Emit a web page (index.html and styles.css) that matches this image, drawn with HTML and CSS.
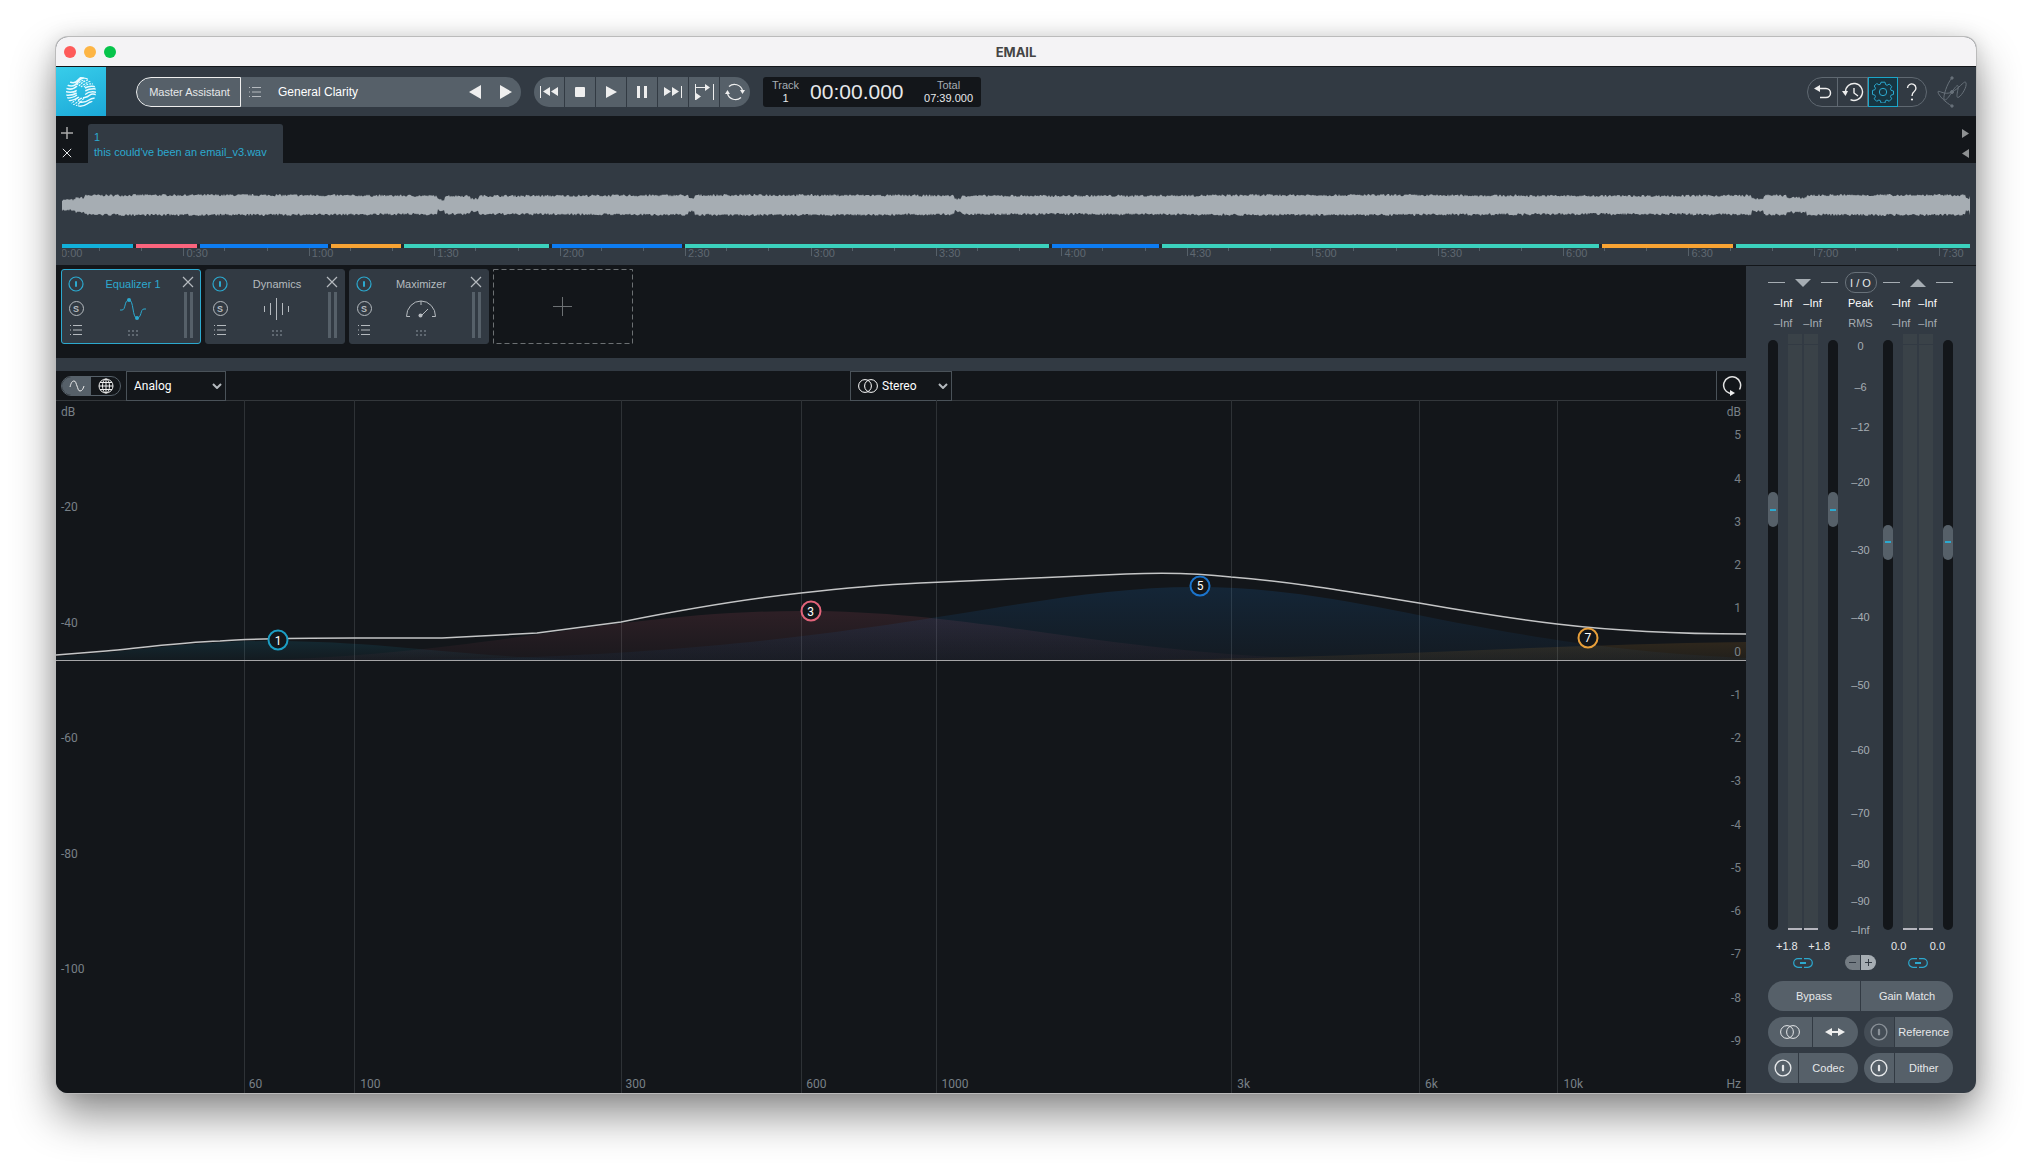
FILE: index.html
```
<!DOCTYPE html>
<html lang="en">
<head>
    <meta charset="UTF-8">
    <meta name="viewport" content="width=device-width, initial-scale=1.0">
    <title>EMAIL</title>
    <link rel="stylesheet" href="styles.css">
</head>
<body>
    <svg class="defs" width="0" height="0" aria-hidden="true">
        <symbol id="power" viewBox="0 0 16 16"><circle cx="8" cy="8" r="7" fill="none" stroke="currentColor" stroke-width="1.200"/><rect x="7" y="5" width="2" height="6" rx="1" fill="currentColor"/></symbol>
        <symbol id="close" viewBox="0 0 12 12"><path d="M1 1l10 10M11 1L1 11" stroke="currentColor" stroke-width="1.200"/></symbol>
        <symbol id="list" viewBox="0 0 12 10"><path d="M0 .5h1M3 .5h9M0 5h1M3 5h9M0 9.5h1M3 9.5h9" stroke="currentColor"/></symbol>
        <symbol id="dots" viewBox="0 0 11 7"><path d="M0 1h2M4 1h2M8 1h2M0 5h2M4 5h2M8 5h2" stroke="currentColor" stroke-width="2"/></symbol>
        <symbol id="chevron" viewBox="0 0 10 6"><path d="M1 1l4 4 4-4" fill="none" stroke="currentColor" stroke-width="2"/></symbol>
        <symbol id="rings" viewBox="0 0 20 14"><circle cx="7" cy="7" r="6.4" fill="none" stroke="currentColor"/><circle cx="13" cy="7" r="6.4" fill="none" stroke="currentColor"/></symbol>
        <symbol id="link" viewBox="0 0 20 10"><path d="M9 .7H5a4.300 4.300 0 0 0 0 8.600H9M11 .7h4a4.300 4.300 0 0 1 0 8.600h-4" fill="none" stroke="currentColor" stroke-width="1.200"/><path d="M7 5h6" stroke="currentColor" stroke-width="2"/></symbol>
    </svg>

    <div class="window">
        <header class="titlebar">
            <div class="lights"><span class="light red"></span><span class="light yellow"></span><span class="light green"></span></div>
            <h1>EMAIL</h1>
        </header>

        <div class="toolbar">
            <div class="logo">
                <svg width="32" height="32" viewBox="0 0 32 32">
                    <mask id="ring"><circle cx="16" cy="16" r="15" fill="#fff"/><circle cx="16" cy="16" r="4.500" fill="#000"/></mask>
                    <g mask="url(#ring)" fill="none" stroke="#e8faff" stroke-width="1.500">
                        <path d="M5 6q5 2 8-2t6-3M2 9q7 3 11-3t10-3M0 12q7 3 12-2M0 15.500q7 2 12-1M0 19q7 1 12-2M2 22q6 0 10-3M3 25q7-1 11-4M20 12q5-3 12-1M20 15q5-3 12-2M20 18.500q5-4 12-2M18 22q5-1 7-3t7 0M14 26q6 1 10-2t8-1M13 30q5 1 9-2t6-2"/>
                        <path stroke-width="1.200" stroke-dasharray="2 1" d="M12 9q3-4 7-5M14 10q4-5 9-6M16 11q4-4 10-6M19 11q4-4 9-3M5 28q4-2 8-7M8 29q4-2 8-7M11 30q4-3 8-8M13 24l4-2"/>
                    </g>
                </svg>
            </div>
            <div class="preset">
                <button class="assistant">Master Assistant</button>
                <button class="preset-name">
                    <svg class="preset-list" width="12" height="10"><use href="#list"/></svg>
                    General Clarity
                </button>
                <button class="arrow" aria-label="Previous preset"><svg width="12" height="14" viewBox="0 0 12 14"><path d="M12 0v14L0 7z" fill="#eee"/></svg></button>
                <button class="arrow" aria-label="Next preset"><svg width="12" height="14" viewBox="0 0 12 14"><path d="M0 0v14l12-7z" fill="#eee"/></svg></button>
            </div>
            <div class="transport">
                <button aria-label="Rewind"><svg width="18" height="12" viewBox="0 0 18 12"><path d="M.5 0v12" stroke="#eee"/><path d="M10 1v9L3 5.500zM18 1v9l-7-4.500z" fill="#eee"/></svg></button>
                <button aria-label="Stop"><svg width="10" height="10"><rect width="10" height="10" rx="1" fill="#eee"/></svg></button>
                <button aria-label="Play"><svg width="11" height="12" viewBox="0 0 11 12"><path d="M0 0v12l11-6z" fill="#eee"/></svg></button>
                <button aria-label="Pause"><svg width="10" height="12"><path d="M1.500 0v12M8.500 0v12" stroke="#eee" stroke-width="3"/></svg></button>
                <button aria-label="Forward"><svg width="18" height="12" viewBox="0 0 18 12"><path d="M17.500 0v12" stroke="#eee"/><path d="M0 1v9l7-4.500zM8 1v9l7-4.500z" fill="#eee"/></svg></button>
                <button aria-label="Play from selection"><svg width="19" height="18" viewBox="0 0 19 18"><path d="M.5 1v16M18.500 1v16M1 4.500h10" stroke="#eee" fill="none"/><path d="M10 1v7l5-3.500zM1 10v7l5-3.500z" fill="#eee"/></svg></button>
                <button aria-label="Loop"><svg width="20" height="20" viewBox="0 0 20 20"><path d="M4 4.500a8.300 8.300 0 0 1 13.500 4M16 15.500a8.300 8.300 0 0 1-13.500-4" fill="none" stroke="#eee" stroke-width="1.200"/><path d="M0 12h5L2.500 8zM15 8h5l-2.500 4z" fill="#eee"/></svg></button>
            </div>
            <div class="clock">
                <div class="clock-item"><span>Track</span><b>1</b></div>
                <div class="clock-time">00:00.000</div>
                <div class="clock-item"><span>Total</span><b>07:39.000</b></div>
            </div>
            <div class="tools">
                <button aria-label="Undo"><svg width="18" height="14" viewBox="0 0 18 14"><path d="M4 3.500h8a4.500 4.500 0 0 1 0 9H6" fill="none" stroke="#eee" stroke-width="1.500"/><path d="M0 3.500L6 0v7z" fill="#eee"/></svg></button>
                <button aria-label="History"><svg width="22" height="20" viewBox="0 0 22 20"><path d="M3.500 10a8.500 8.500 0 1 1 5 7.700M12 6v5l4 3" fill="none" stroke="#eee" stroke-width="1.400"/><path d="M0 9h6l-2.500 5z" fill="#eee"/></svg></button>
                <button class="active" aria-label="Settings"><svg width="22" height="22" viewBox="0 0 22 22" fill="none" stroke="currentColor"><circle cx="11" cy="11" r="3.700"/><path d="M9 1.500h4l.6 2.400 1.500.7 2.200-1.300 2.400 2.600-1.200 2.200.6 1.600 2.400.6v3.400l-2.400.7-.6 1.500 1.200 2.200-2.500 2.500-2.200-1.300-1.500.7-.6 2.300H9l-.6-2.300-1.500-.7-2.200 1.300-2.500-2.500 1.300-2.200-.7-1.500-2.300-.7V9.700l2.300-.6.7-1.600-1.300-2.200 2.500-2.500 2.200 1.300 1.500-.6z" transform="translate(0 -.3)"/></svg></button>
                <button aria-label="Help"><svg width="12" height="18" viewBox="0 0 12 18"><path d="M1.500 5a4.200 4.200 0 1 1 6.700 3.500Q6 10 6 13" fill="none" stroke="#eee" stroke-width="1.400"/><circle cx="6" cy="16.500" r="1.100" fill="#eee"/></svg></button>
            </div>
            <svg class="brand" width="30" height="32" viewBox="0 0 30 32" fill="none" stroke="#68717a"><path d="M15 30C9 27 1 19 1 16s6 4 14 0S28 3 29 7s-4 12-7 14-2-3-1-8-1-5-6 3-7 9-8 7 3-16 8-21"/><circle cx="15" cy="2" r="1.200" fill="#68717a"/><circle cx="15" cy="16" r="1.500" fill="#68717a"/><circle cx="15" cy="30" r="1.200" fill="#68717a"/></svg>
        </div>

        <div class="tabs">
            <div class="tab-actions">
                <button aria-label="Add track"><svg width="12" height="12" viewBox="0 0 12 12"><path d="M6 0v12M0 6h12" stroke="#aaa" stroke-width="1.500"/></svg></button>
                <button aria-label="Close track"><svg width="10" height="10"><use href="#close"/></svg></button>
            </div>
            <button class="tab"><span>1</span><span>this could've been an email_v3.wav</span></button>
            <div class="tab-scroll">
                <button aria-label="Next tab"><svg width="7" height="9" viewBox="0 0 7 9"><path d="M0 0v9l7-4.500z" fill="#8e9192"/></svg></button>
                <button aria-label="Previous tab"><svg width="7" height="9" viewBox="0 0 7 9"><path d="M7 0v9L0 4.500z" fill="#8e9192"/></svg></button>
            </div>
        </div>

        <section class="timeline">
            <svg class="waveform" viewBox="0 0 1908 24" preserveAspectRatio="none"><path id="wave" fill="#a6adb3"/></svg>
            <div class="segments">
                <i class="cyan" style="flex-grow: 71"></i>
                <i class="pink" style="flex-grow: 61"></i>
                <i class="blue" style="flex-grow: 128"></i>
                <i class="orange" style="flex-grow: 70"></i>
                <i class="teal" style="flex-grow: 145"></i>
                <i class="blue" style="flex-grow: 130"></i>
                <i class="teal" style="flex-grow: 364"></i>
                <i class="blue" style="flex-grow: 107"></i>
                <i class="teal" style="flex-grow: 437"></i>
                <i class="orange" style="flex-grow: 131"></i>
                <i class="teal" style="flex-grow: 234"></i>
            </div>
            <ol class="ruler">
                <li>0:00</li><li>0:30</li><li>1:00</li><li>1:30</li><li>2:00</li><li>2:30</li><li>3:00</li><li>3:30</li>
                <li>4:00</li><li>4:30</li><li>5:00</li><li>5:30</li><li>6:00</li><li>6:30</li><li>7:00</li><li>7:30</li>
            </ol>
        </section>

        <div class="workspace">
            <main class="main">
                <div class="modules">
                    <article class="module selected">
                        <div class="module-side">
                            <button class="on" aria-label="Power"><svg width="16" height="16"><use href="#power"/></svg></button>
                            <button class="solo" aria-label="Solo">S</button>
                            <button aria-label="Presets"><svg width="12" height="10"><use href="#list"/></svg></button>
                        </div>
                        <div class="module-body">
                            <h2>Equalizer 1</h2>
                            <svg width="28" height="24" viewBox="0 0 28 24"><path d="M1 13h2c4 0 2-10 7-10s3 18 8 18 3-9 7-9h2" fill="none" stroke="currentColor"/><circle cx="10" cy="3" r="2" fill="currentColor"/><circle cx="18" cy="21" r="2" fill="currentColor"/></svg>
                            <svg class="grip" width="11" height="7"><use href="#dots"/></svg>
                        </div>
                        <div class="module-end">
                            <button aria-label="Remove"><svg width="12" height="12"><use href="#close"/></svg></button>
                            <div class="mini"><i></i><i></i></div>
                        </div>
                    </article>
                    <article class="module">
                        <div class="module-side">
                            <button class="on" aria-label="Power"><svg width="16" height="16"><use href="#power"/></svg></button>
                            <button class="solo" aria-label="Solo">S</button>
                            <button aria-label="Presets"><svg width="12" height="10"><use href="#list"/></svg></button>
                        </div>
                        <div class="module-body">
                            <h2>Dynamics</h2>
                            <svg width="28" height="24" viewBox="0 0 28 24"><path d="M1.500 9v6M7.500 6v12M13.500 1v22M19.500 6v12M25.500 9v6" stroke="currentColor"/></svg>
                            <svg class="grip" width="11" height="7"><use href="#dots"/></svg>
                        </div>
                        <div class="module-end">
                            <button aria-label="Remove"><svg width="12" height="12"><use href="#close"/></svg></button>
                            <div class="mini"><i></i><i></i></div>
                        </div>
                    </article>
                    <article class="module">
                        <div class="module-side">
                            <button class="on" aria-label="Power"><svg width="16" height="16"><use href="#power"/></svg></button>
                            <button class="solo" aria-label="Solo">S</button>
                            <button aria-label="Presets"><svg width="12" height="10"><use href="#list"/></svg></button>
                        </div>
                        <div class="module-body">
                            <h2>Maximizer</h2>
                            <svg width="32" height="24" viewBox="0 0 32 24"><path d="M5 19.500H1.500a14.500 15.500 0 1 1 29 0H27M16 4v4M16 19l7-7" fill="none" stroke="currentColor"/><circle cx="15.500" cy="18.500" r="2" fill="currentColor"/></svg>
                            <svg class="grip" width="11" height="7"><use href="#dots"/></svg>
                        </div>
                        <div class="module-end">
                            <button aria-label="Remove"><svg width="12" height="12"><use href="#close"/></svg></button>
                            <div class="mini"><i></i><i></i></div>
                        </div>
                    </article>
                    <button class="module-add" aria-label="Add module">
                        <svg width="140" height="75" fill="none" stroke="#6c7073"><rect x=".5" y=".5" width="139" height="74" stroke-dasharray="5 3"/><path d="M60 37.500h19M69.500 28v19"/></svg>
                    </button>
                </div>

                <div class="eq-bar">
                    <div class="eq-left">
                        <div class="view-toggle">
                            <button class="current" aria-label="Curve view"><svg width="16" height="12" viewBox="0 0 16 12"><path d="M1 7c1-4 2-6 4-6s2 3 3 5 1 5 3 5 3-2 4-5" fill="none" stroke="#eee"/></svg></button>
                            <button aria-label="Global view"><svg width="16" height="16" viewBox="0 0 16 16" fill="none" stroke="#eee"><circle cx="8" cy="8" r="7"/><ellipse cx="8" cy="8" rx="3.500" ry="7"/><path d="M8 1v14M1 8h14M2 4.500h12M2 11.500h12"/></svg></button>
                        </div>
                        <div class="dropdown mode">
                            <select aria-label="Filter mode"><option>Analog</option><option>Digital</option></select>
                            <svg class="caret" width="10" height="6"><use href="#chevron"/></svg>
                        </div>
                    </div>
                    <div class="dropdown">
                        <svg class="lead" width="20" height="14"><use href="#rings"/></svg>
                        <select aria-label="Channel mode"><option>Stereo</option><option>Mid/Side</option></select>
                        <svg class="caret" width="10" height="6"><use href="#chevron"/></svg>
                    </div>
                    <button class="reset" aria-label="Reset"><svg width="20" height="22" viewBox="0 0 20 22"><path d="M17.500 14.500A8.500 8.500 0 1 0 8 18.500" fill="none" stroke="#e2e2e2" stroke-width="1.500"/><path d="M8 15v6l5-3z" fill="#eee"/></svg></button>
                </div>

                <div class="chart">
                    <svg class="plot" viewBox="0 0 1690 693" preserveAspectRatio="none">
                        <defs>
                            <linearGradient id="g-red" x1="0" y1="0" x2="0" y2="1"><stop offset="0" stop-color="#f0637a" stop-opacity=".12"/><stop offset="1" stop-color="#f0637a" stop-opacity=".03"/></linearGradient>
                            <linearGradient id="g-blue" x1="0" y1="0" x2="0" y2="1"><stop offset="0" stop-color="#1a86e8" stop-opacity=".14"/><stop offset="1" stop-color="#1a86e8" stop-opacity=".04"/></linearGradient>
                            <linearGradient id="g-cyan" x1="0" y1="0" x2="0" y2="1"><stop offset="0" stop-color="#18b0dc" stop-opacity=".12"/><stop offset="1" stop-color="#18b0dc" stop-opacity=".03"/></linearGradient>
                            <linearGradient id="g-orange" x1="0" y1="0" x2="0" y2="1"><stop offset="0" stop-color="#f4a42e" stop-opacity=".12"/><stop offset="1" stop-color="#f4a42e" stop-opacity=".06"/></linearGradient>
                        </defs>
                        <path class="grid-line" d="M188.500 0v693M298.500 0v693M565.500 0v693M745.500 0v693M880.500 0v693M1175.500 0v693M1363.500 0v693M1501.500 0v693"/>
                        <path fill="url(#g-cyan)" d="M0 257C80 251 140 241 214 241C330 241 400 257 540 260H0z"/>
                        <path fill="url(#g-red)" d="M200 260C420 256 560 211 745 211C930 211 1040 254 1290 260z"/>
                        <path fill="url(#g-blue)" d="M360 260C820 254 960 187 1140 187C1310 187 1420 246 1690 258V260z"/>
                        <path fill="url(#g-orange)" d="M1090 260C1330 257 1480 245 1690 242V260z"/>
                        <path class="zero" d="M0 260.500H1690"/>
                        <path class="response" d="M0 255L50 251C90 247 130 242 164 241C190 239 240 238 298 238L386 238L481 233L565 222C625 210 690 199 745 193C780 189 820 185 864 183S1024 176 1070 174S1150 174 1175 177C1240 182 1300 193 1363 203C1420 213 1460 219 1501 224C1560 231 1620 234 1690 234"/>
                    </svg>
                    <div class="levels"><span>-20</span><span>-40</span><span>-60</span><span>-80</span><span>-100</span></div>
                    <div class="gains">
                        <span>5</span><span>4</span><span>3</span><span>2</span><span>1</span><span>0</span><span>-1</span><span>-2</span>
                        <span>-3</span><span>-4</span><span>-5</span><span>-6</span><span>-7</span><span>-8</span><span>-9</span>
                    </div>
                    <span class="unit unit-left">dB</span>
                    <span class="unit unit-right">dB</span>
                    <div class="freqs">
                        <span style="left: 11.400%">60</span>
                        <span style="left: 18%">100</span>
                        <span style="left: 33.700%">300</span>
                        <span style="left: 44.400%">600</span>
                        <span style="left: 52.400%">1000</span>
                        <span style="left: 69.900%">3k</span>
                        <span style="left: 81%">6k</span>
                        <span style="left: 89.200%">10k</span>
                    </div>
                    <span class="unit unit-hz">Hz</span>
                    <button class="node cyan" style="left: 13.150%; top: 34.700%">1</button>
                    <button class="node pink" style="left: 44.650%; top: 30.500%">3</button>
                    <button class="node blue" style="left: 67.700%; top: 26.800%">5</button>
                    <button class="node orange" style="left: 90.650%; top: 34.300%">7</button>
                </div>
            </main>

            <aside class="console">
                <div class="io">
                    <div class="io-side"><i></i><svg width="16" height="8"><path d="M0 0h16L8 8z" fill="#a6adb3"/></svg><i></i></div>
                    <button class="io-button">I / O</button>
                    <div class="io-side"><i></i><svg width="16" height="8"><path d="M0 8h16L8 0z" fill="#a6adb3"/></svg><i></i></div>
                </div>
                <div class="readout peak"><div><span>–Inf</span><span>–Inf</span></div><span>Peak</span><div><span>–Inf</span><span>–Inf</span></div></div>
                <div class="readout"><div><span>–Inf</span><span>–Inf</span></div><span>RMS</span><div><span>–Inf</span><span>–Inf</span></div></div>
                <div class="faders">
                    <div class="strip">
                        <input type="range" max="1000" value="726" aria-label="Input gain left">
                        <div class="meter"><i></i><i></i></div>
                        <input type="range" max="1000" value="726" aria-label="Input gain right">
                    </div>
                    <div class="scale">
                        <span style="top: 2%">0</span>
                        <span style="top: 8.900%">–6</span>
                        <span style="top: 15.600%">–12</span>
                        <span style="top: 24.800%">–20</span>
                        <span style="top: 36.200%">–30</span>
                        <span style="top: 47.500%">–40</span>
                        <span style="top: 58.900%">–50</span>
                        <span style="top: 69.800%">–60</span>
                        <span style="top: 80.300%">–70</span>
                        <span style="top: 89%">–80</span>
                        <span style="top: 95.100%">–90</span>
                        <span style="top: 100%">–Inf</span>
                    </div>
                    <div class="strip">
                        <input type="range" max="1000" value="667" aria-label="Output gain left">
                        <div class="meter"><i></i><i></i></div>
                        <input type="range" max="1000" value="667" aria-label="Output gain right">
                    </div>
                </div>
                <div class="gain-values"><div><span>+1.8</span><span>+1.8</span></div><div><span>0.0</span><span>0.0</span></div></div>
                <div class="links">
                    <button class="link" aria-label="Link input"><svg width="20" height="10"><use href="#link"/></svg></button>
                    <div class="zoom">
                        <button aria-label="Zoom out"><svg width="7" height="7"><path d="M0 3.500h7" stroke="#323a43"/></svg></button>
                        <button aria-label="Zoom in"><svg width="7" height="7"><path d="M0 3.500h7M3.500 0v7" stroke="#323a43"/></svg></button>
                    </div>
                    <button class="link" aria-label="Link output"><svg width="20" height="10"><use href="#link"/></svg></button>
                </div>
                <div class="pads">
                    <div class="pad wide"><button>Bypass</button><button>Gain Match</button></div>
                    <div class="pad even">
                        <button aria-label="Stereo mode"><svg width="20" height="14"><use href="#rings"/></svg></button>
                        <button aria-label="Swap channels"><svg width="20" height="8" viewBox="0 0 20 8"><path d="M5 4h10" stroke="#eee" stroke-width="2"/><path d="M7 0v8L0 4zM13 0v8l7-4z" fill="#eee"/></svg></button>
                    </div>
                    <div class="pad off"><button aria-label="Reference power"><svg width="18" height="18"><use href="#power"/></svg></button><button>Reference</button></div>
                    <div class="pad"><button aria-label="Codec power"><svg width="18" height="18"><use href="#power"/></svg></button><button>Codec</button></div>
                    <div class="pad"><button aria-label="Dither power"><svg width="18" height="18"><use href="#power"/></svg></button><button>Dither</button></div>
                </div>
            </aside>
        </div>
    </div>

    <script src="wave.js"></script>
</body>
</html>
```
FILE: styles.css
```
* {
    box-sizing: border-box;
}
body {
    margin: 0;
    padding: 37px 56px 74px;
    min-height: 100vh;
    display: flex;
    background-color: #fff;
    color: #e6e8ea;
    font-family: "Liberation Sans", Arial, sans-serif;
    font-size: 11px;
    line-height: 14px;
}
button {
    display: flex;
    align-items: center;
    justify-content: center;
    padding: 0;
    border: 0;
    background: none;
    color: inherit;
    font: inherit;
    cursor: pointer;
}
h1, h2 {
    margin: 0;
}
svg {
    display: block;
    flex: none;
}
.defs {
    position: absolute;
}
.window {
    flex: 1;
    min-width: 0;
    display: flex;
    flex-direction: column;
    overflow: hidden;
    border-radius: 12px;
    background-color: #323a43;
    box-shadow: 0 0 0 1px #bbb, 0 22px 44px rgba(0, 0, 0, 0.45), 0 0 20px rgba(0, 0, 0, 0.12);
}

/* title bar */
.titlebar {
    display: grid;
    grid-template-columns: 1fr auto 1fr;
    align-items: center;
    height: 30px;
    padding: 0 8px;
    border-bottom: 1px solid #13161a;
    background-color: #f4f3f5;
}
.titlebar h1 {
    color: #444;
    font: bold 13px/16px Inter, sans-serif;
}
.lights {
    display: flex;
    gap: 8px;
}
.light {
    width: 12px;
    height: 12px;
    border-radius: 50%;
}
.light.red { background-color: #fe5b5a; }
.light.yellow { background-color: #fdb545; }
.light.green { background-color: #06c44b; }

/* toolbar */
.toolbar {
    display: flex;
    align-items: center;
    height: 49px;
    padding-right: 9px;
}
.logo {
    display: flex;
    align-items: center;
    justify-content: center;
    width: 50px;
    height: 49px;
    margin-right: 30px;
    background: linear-gradient(160deg, #38cdea, #1ba8d8);
}
.preset {
    display: flex;
    width: 385px;
    height: 30px;
    margin-right: 13px;
    border-radius: 15px;
    background-color: #566069;
    overflow: hidden;
}
.assistant {
    width: 105px;
    padding-left: 2px;
    border: 1px solid #eee;
    border-radius: 15px 0 0 15px;
}
.preset-name {
    flex: 1;
    justify-content: flex-start;
    gap: 17px;
    padding-left: 8px;
    color: #fff;
    font-size: 12px;
}
.preset-list {
    color: #b5babf;
}
.arrow {
    width: 31px;
}
.transport {
    display: flex;
    gap: 1px;
    margin-right: 13px;
    border-radius: 15px;
    overflow: hidden;
}
.transport button {
    width: 30px;
    height: 30px;
    background-color: #566069;
}
.clock {
    display: flex;
    align-items: center;
    gap: 11px;
    width: 218px;
    height: 30px;
    padding: 0 8px 0 9px;
    border-radius: 3px;
    background-color: #13161a;
}
.clock-item {
    display: flex;
    flex-direction: column;
    align-items: center;
    line-height: 13px;
}
.clock-item:last-child {
    margin-left: auto;
}
.clock-item span {
    color: #a6adb3;
}
.clock-item b {
    font-weight: normal;
}
.clock-time {
    font-size: 21px;
    line-height: 24px;
}
.tools {
    display: flex;
    margin-left: auto;
    border: 1px solid #5f6871;
    border-radius: 15px;
}
.tools button {
    width: 30px;
    height: 28px;
    border-right: 1px solid #5f6871;
}
.tools button:last-child {
    width: 28px;
    border-right: 0;
}
.tools .active {
    height: 30px;
    margin: -1px 0;
    border: 1px solid #1ba6c9;
    background-color: #173541;
    color: #2ca9cf;
}
.brand {
    margin-left: 10px;
}

/* track tabs */
.tabs {
    display: flex;
    height: 47px;
    background-color: #13161a;
}
.tab-actions, .tab-scroll {
    display: flex;
    flex-direction: column;
    gap: 6px;
    padding: 10px 4px 0;
}
.tab-actions {
    width: 32px;
    align-items: flex-start;
}
.tab-actions button, .tab-scroll button {
    width: 14px;
    height: 14px;
    flex: none;
}
.tab {
    flex-direction: column;
    align-items: flex-start;
    width: 195px;
    margin-top: 8px;
    padding: 2px 6px 0;
    border-radius: 3px 3px 0 0;
    background-color: #323a43;
    color: #2ca9cf;
    line-height: 15px;
    white-space: nowrap;
}
.tab-scroll {
    margin-left: auto;
}

/* timeline */
.timeline {
    height: 102px;
    padding: 30px 6px 0;
    overflow: hidden;
}
.waveform {
    width: 100%;
    height: 24px;
}
.segments {
    display: flex;
    gap: 3px;
    height: 4px;
    margin-top: 27px;
    background-color: #22272d;
}
.segments i { flex-basis: 0; }
.segments .cyan { background-color: #12b0da; }
.segments .pink { background-color: #fb647d; }
.segments .blue { background-color: #0d7cf2; }
.segments .orange { background-color: #f8a333; }
.segments .teal { background-color: #3bd1bd; }
.ruler {
    display: flex;
    margin: 0 0 0 -4px;
    padding: 0;
    list-style: none;
    overflow: hidden;
    clip-path: inset(0 0 0 4px);
}
.ruler li {
    flex: 0 0 6.560%;
    height: 14px;
    padding-left: 3px;
    color: #5f6871;
    line-height: 11px;
    background:
        linear-gradient(#566069, #566069) 0 0 / 1px 8px no-repeat,
        linear-gradient(#566069, #566069) 33% 0 / 1px 3px no-repeat,
        linear-gradient(#566069, #566069) 67% 0 / 1px 3px no-repeat;
}

/* modules */
.workspace {
    flex: 1;
    display: flex;
    border-top: 1px solid #13161a;
}
.main {
    flex: 1;
    min-width: 0;
    display: flex;
    flex-direction: column;
    background-color: #13161a;
}
.modules {
    display: flex;
    align-items: flex-start;
    gap: 4px;
    height: 105px;
    padding: 3px 5px;
    border-bottom: 13px solid #323a43;
}
.module {
    display: flex;
    width: 140px;
    height: 75px;
    border: 1px solid #323a43;
    border-radius: 3px;
    background-color: #323a43;
    color: #b5babf;
}
.module.selected {
    border-color: #2ca9cf;
}
.module-side, .module-end {
    display: flex;
    flex-direction: column;
    align-items: center;
    width: 28px;
    padding-top: 6px;
}
.module-side {
    gap: 9px;
}
.on {
    color: #2ca9cf;
}
.solo {
    width: 15px;
    height: 15px;
    border: 1px solid #b5babf;
    border-radius: 50%;
    font-size: 9px;
    font-weight: bold;
    line-height: 12px;
}
.module-body {
    flex: 1;
    display: flex;
    flex-direction: column;
    align-items: center;
    padding-top: 7px;
}
.module-body h2 {
    margin-bottom: 6px;
    font-size: 11px;
    font-weight: normal;
    line-height: 14px;
    white-space: nowrap;
}
.selected .module-body {
    color: #2ca9cf;
}
.module-body .grip {
    margin-top: 9px;
    color: #5f6871;
}
.module-end {
    gap: 4px;
    width: 24px;
}
.mini {
    display: flex;
    gap: 3px;
}
.mini i {
    width: 3px;
    height: 46px;
    background-color: #566069;
}

/* equalizer header */
.eq-bar {
    display: grid;
    grid-template-columns: 1fr 102px 1fr;
    align-items: center;
    height: 30px;
    border-bottom: 1px solid #33373b;
}
.eq-left {
    display: flex;
    align-items: center;
    align-self: stretch;
    gap: 5px;
    padding-left: 5px;
}
.view-toggle {
    display: flex;
    width: 60px;
    height: 20px;
    border: 1px solid #566069;
    border-radius: 10px;
    overflow: hidden;
}
.view-toggle button {
    flex: 1;
}
.view-toggle .current {
    background-color: #566069;
}
.dropdown {
    display: flex;
    align-items: center;
    align-self: stretch;
    margin-bottom: -1px;
    padding: 0 3px 0 7px;
    border: 1px solid #4a5259;
    color: #fff;
}
.mode {
    width: 100px;
}
.dropdown select {
    appearance: none;
    flex: 1;
    min-width: 0;
    padding: 0;
    border: 0;
    background: none;
    color: #fff;
    font: 12px/16px Roboto, sans-serif;
}
.lead {
    margin-right: 4px;
}
.caret {
    color: #b5babf;
}
.reset {
    justify-self: end;
    width: 30px;
    height: 29px;
    border-left: 1px solid #4a5259;
}

/* spectrum chart */
.chart {
    position: relative;
    flex: 1;
    margin-top: -1px;
    color: #788087;
    font-family: Roboto, sans-serif;
    font-size: 12px;
}
.plot {
    position: absolute;
    width: 100%;
    height: 100%;
}
.plot path {
    vector-effect: non-scaling-stroke;
}
.grid-line { stroke: #2e3236; }
.zero { stroke: #a6a6a8; }
.response {
    fill: none;
    stroke: #c4c5c6;
    stroke-width: 1.5px;
    stroke-linejoin: round;
}
.levels, .gains {
    position: absolute;
    display: flex;
    flex-direction: column;
    justify-content: space-between;
}
.levels {
    top: 14.500%;
    bottom: 16.900%;
    left: 5px;
}
.gains {
    top: 4.100%;
    bottom: 6.500%;
    right: 5px;
    text-align: right;
}
.unit {
    position: absolute;
    right: 5px;
    top: 5px;
}
.unit-left {
    right: auto;
    left: 5px;
}
.unit-hz {
    top: auto;
    bottom: 2px;
}
.freqs span {
    position: absolute;
    bottom: 2px;
}
.node {
    position: absolute;
    width: 21px;
    height: 21px;
    border: 2px solid;
    border-radius: 50%;
    background-color: #13161a;
    color: #fff;
    font-size: 12px;
    transform: translate(-50%, -50%);
}
.node.cyan { border-color: #1c9ec4; }
.node.pink { border-color: #e2647a; }
.node.blue { border-color: #1b74cc; }
.node.orange { border-color: #e89f3a; }

/* console */
.console {
    display: flex;
    flex-direction: column;
    width: 230px;
    padding: 6px 23px 10px 22px;
}
.io, .readout, .faders {
    display: grid;
    grid-template-columns: 70px 1fr 70px;
    align-items: center;
    text-align: center;
}
.io-side {
    display: flex;
    align-items: center;
    justify-content: space-between;
}
.io-side i {
    width: 17px;
    height: 1px;
    background-color: #a6adb3;
}
.io-button {
    justify-self: center;
    width: 32px;
    height: 21px;
    border: 1px solid #69727a;
    border-radius: 10px;
}
.readout {
    height: 20px;
    color: #a6adb3;
}
.readout div {
    display: flex;
    gap: 11px;
    padding-left: 6px;
}
.readout div:last-child {
    gap: 8px;
    padding-left: 9px;
}
.readout.peak {
    color: #fff;
}
.faders {
    flex: 1;
    align-items: stretch;
    margin-top: 1px;
}
.strip {
    display: flex;
    justify-content: space-between;
}
.strip input {
    appearance: none;
    writing-mode: vertical-lr;
    direction: rtl;
    width: 10px;
    height: auto;
    margin: 6px 0 0;
    border-radius: 5px;
    background-color: #13161a;
}
.strip input::-webkit-slider-thumb {
    appearance: none;
    width: 10px;
    height: 35px;
    border-radius: 5px;
    background: linear-gradient(#2ca9cf, #2ca9cf) center / 6px 2px no-repeat #566069;
}
.meter {
    display: flex;
    gap: 2px;
}
.meter i {
    width: 14px;
    border-bottom: 2px solid #b5b5bd;
    background: linear-gradient(#323a43, #323a43) 0 10px / 100% 1px no-repeat #3a4248;
}
.scale {
    position: relative;
    color: #a6adb3;
}
.scale span {
    position: absolute;
    left: 0;
    right: 0;
    transform: translateY(-50%);
}
.gain-values {
    display: flex;
    justify-content: space-between;
    margin-top: 9px;
}
.gain-values div {
    display: flex;
    justify-content: space-between;
    width: 70px;
    padding: 0 8px;
}
.links {
    display: grid;
    grid-template-columns: 70px 1fr 70px;
    justify-items: center;
    margin: 2px 0 11px;
}
.link {
    color: #2ca9cf;
}
.zoom {
    display: flex;
    gap: 1px;
    border-radius: 8px;
    overflow: hidden;
}
.zoom button {
    width: 15px;
    height: 15px;
    background-color: #a6adb3;
}
.zoom button:first-child {
    background-color: #747c83;
}
.pads {
    display: grid;
    grid-template-columns: 1fr 1fr;
    gap: 6px;
}
.pad {
    display: flex;
    gap: 1px;
    height: 30px;
    border-radius: 15px;
    overflow: hidden;
}
.pad button {
    flex: 1;
    background-color: #566069;
}
.pad button:first-child {
    flex: 0 0 30px;
}
.pad.wide {
    grid-column: 1 / 3;
}
.pad.wide button, .pad.even button, .pad.wide button:first-child, .pad.even button:first-child {
    flex: 1;
}
.pad.off button:first-child {
    background-color: #444d56;
    color: #8a9198;
}
```
FILE: wave.js
```
const wave = document.getElementById("wave");

// [start, end, half height] of the quieter parts of the track
const quiet = [
    [0, 14, 4],
    [14, 23, 6],
    [376, 383, 4],
    [409, 417, 5],
    [627, 633, 5],
    [893, 900, 5],
    [1690, 1702, 5],
    [1725, 1745, 6],
    [1904, 1908, 5],
];

let seed = 7;

function random() {
    seed = (seed * 16807) % 2147483647;
    return seed / 2147483647;
}

function level(x) {
    const part = quiet.find(([start, end]) => x >= start && x < end);
    return part ? part[2] : 8.3 + Math.sin(x / 90) * 0.4;
}

const upper = [];
const lower = [];
for (let x = 0; x <= 1908; x++) {
    upper.push(`${x} ${(12 - level(x) - random() * 2.4).toFixed(1)}`);
    lower.unshift(`${x} ${(12 + level(x) + random() * 2.4).toFixed(1)}`);
}
wave.setAttribute("d", `M${upper.join("L")}L${lower.join("L")}z`);
```
